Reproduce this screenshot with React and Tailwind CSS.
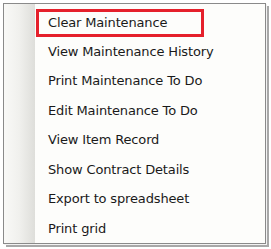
import React from 'react';

const items = [
  'Clear Maintenance',
  'View Maintenance History',
  'Print Maintenance To Do',
  'Edit Maintenance To Do',
  'View Item Record',
  'Show Contract Details',
  'Export to spreadsheet',
  'Print grid',
];

const App = () => {
  return (
    <div className="w-[271px] h-[249px] bg-white pt-[3px] pl-[3px]">
      <div className="w-[263px] h-[241px] border border-[#8a8a8a] shadow-[1px_1px_0_#f2f2f2,3px_3px_0_#a8a8a8] flex bg-[#fdfdfb]">
        <div className="w-[31px] bg-gradient-to-r from-[#f9f9f7] via-[#f0f0ed] to-[#dededa]" />
        <div
          className="flex-1 pt-[3px] tracking-[-0.15px]"
          style={{ fontFamily: '"DejaVu Sans", Verdana, sans-serif' }}
        >
          {items.map((label, i) =>
            i === 0 ? (
              <div
                key={label}
                className="mt-[2px] h-[27.5px] w-[168px] ml-[1px] pl-[9px] flex items-center border-[3px] border-[#e5202b] text-[13px] text-[#1a1a1a]"
              >
                {label}
              </div>
            ) : (
              <div
                key={label}
                className="h-[29.5px] flex items-center pl-[13px] text-[13px] text-[#1a1a1a]"
              >
                {label}
              </div>
            )
          )}
        </div>
      </div>
    </div>
  );
};

export default App;
